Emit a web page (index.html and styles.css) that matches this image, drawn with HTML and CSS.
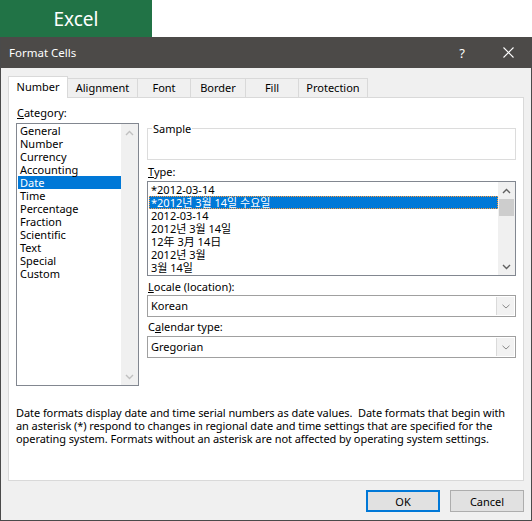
FILE: index.html
```html
<!DOCTYPE html>
<html lang="en">
<head>
<meta charset="utf-8">
<title>Format Cells</title>
<link rel="stylesheet" href="styles.css">
</head>
<body>
<div class="app-top"><div class="brand">Excel</div></div>
<div class="dialog">
  <div class="titlebar">
    <span class="title">Format Cells</span>
    <span class="tb-btn help">?</span>
    <span class="tb-btn close"><svg width="11" height="11" viewBox="0 0 11 11"><path d="M0.5 0.5 L10.5 10.5 M10.5 0.5 L0.5 10.5" stroke="#fff" stroke-width="1.1" fill="none"/></svg></span>
  </div>
  <div class="body">
    <div class="tabs">
      <div class="tab active t-number">Number</div>
      <div class="tab t-align">Alignment</div>
      <div class="tab t-font">Font</div>
      <div class="tab t-border">Border</div>
      <div class="tab t-fill">Fill</div>
      <div class="tab t-prot">Protection</div>
    </div>
    <div class="panel">
      <div class="cols">
        <div class="left">
          <div class="label"><u>C</u>ategory:</div>
          <div class="listbox cat">
            <div class="items">
              <div class="row">General</div>
              <div class="row">Number</div>
              <div class="row">Currency</div>
              <div class="row">Accounting</div>
              <div class="row sel">Date</div>
              <div class="row">Time</div>
              <div class="row">Percentage</div>
              <div class="row">Fraction</div>
              <div class="row">Scientific</div>
              <div class="row">Text</div>
              <div class="row">Special</div>
              <div class="row">Custom</div>
            </div>
            <div class="vscroll disabled">
              <div class="arrow"><svg width="9" height="6" viewBox="0 0 9 6"><path d="M1 5 L4.5 1.5 L8 5" stroke="currentColor" stroke-width="1.4" fill="none"/></svg></div>
              <div class="track"></div>
              <div class="arrow"><svg width="9" height="6" viewBox="0 0 9 6"><path d="M1 1 L4.5 4.5 L8 1" stroke="currentColor" stroke-width="1.4" fill="none"/></svg></div>
            </div>
          </div>
        </div>
        <div class="right">
          <fieldset class="sample"><legend>Sample</legend><div class="sample-body"></div></fieldset>
          <div class="label type-label"><u>T</u>ype:</div>
          <div class="listbox type">
            <div class="items">
              <div class="row">*2012-03-14</div>
              <div class="row sel focus">*2012년 3월 14일 수요일</div>
              <div class="row">2012-03-14</div>
              <div class="row">2012년 3월 14일</div>
              <div class="row">12年 3月 14日</div>
              <div class="row">2012년 3월</div>
              <div class="row">3월 14일</div>
            </div>
            <div class="vscroll">
              <div class="arrow"><svg width="9" height="6" viewBox="0 0 9 6"><path d="M1 5 L4.5 1.5 L8 5" stroke="currentColor" stroke-width="1.4" fill="none"/></svg></div>
              <div class="track"><div class="thumb"></div></div>
              <div class="arrow"><svg width="9" height="6" viewBox="0 0 9 6"><path d="M1 1 L4.5 4.5 L8 1" stroke="currentColor" stroke-width="1.4" fill="none"/></svg></div>
            </div>
          </div>
          <div class="label locale-label"><u>L</u>ocale (location):</div>
          <div class="select">
            <span class="value">Korean</span>
            <span class="drop"><svg width="8" height="5" viewBox="0 0 8 5"><path d="M0.5 0.8 L4 4 L7.5 0.8" stroke="#8a8a8a" stroke-width="1" fill="none"/></svg></span>
          </div>
          <div class="label cal-label">C<u>a</u>lendar type:</div>
          <div class="select">
            <span class="value">Gregorian</span>
            <span class="drop"><svg width="8" height="5" viewBox="0 0 8 5"><path d="M0.5 0.8 L4 4 L7.5 0.8" stroke="#8a8a8a" stroke-width="1" fill="none"/></svg></span>
          </div>
        </div>
      </div>
      <p class="desc">Date formats display date and time serial numbers as date values.&nbsp; Date formats that begin with<br>an asterisk (*) respond to changes in regional date and time settings that are specified for the<br>operating system. Formats without an asterisk are not affected by operating system settings.</p>
    </div>
    <div class="buttons">
      <button class="btn ok">OK</button>
      <button class="btn">Cancel</button>
    </div>
  </div>
</div>
</body>
</html>
```
FILE: styles.css
```css
* { box-sizing: border-box; }
html, body { margin: 0; padding: 0; }
body {
  width: 532px;
  height: 521px;
  overflow: hidden;
  background: #fff;
  color: #000;
  font-family: "Noto Sans", "Noto Sans CJK KR", sans-serif;
  font-size: 11px;
}
.app-top { height: 37px; display: flex; }
.brand {
  width: 152px;
  background: #217346;
  color: #fff;
  font-size: 19px;
  display: flex;
  align-items: center;
  justify-content: center;
  padding-top: 1px;
}
.dialog {
  height: 484px;
  border: 1px solid #4a4a4a;
  border-top: 0;
  background: #f0f0f0;
  display: flex;
  flex-direction: column;
}
.titlebar {
  height: 31px;
  background: #4c4a48;
  color: #fff;
  display: flex;
  align-items: center;
  padding-left: 8px;
  font-size: 11.5px;
}
.title { flex: 1; }
.tb-btn {
  width: 46px;
  height: 31px;
  display: flex;
  align-items: center;
  justify-content: center;
}
.help { font-size: 13px; }
.body { flex: 1; display: flex; flex-direction: column; }
.tabs {
  margin-top: 8px;
  height: 21px;
  padding-left: 7px;
  display: flex;
  align-items: flex-end;
}
.tab {
  height: 19px;
  border: 1px solid #d9d9d9;
  border-bottom: 0;
  margin-left: -1px;
  background: #f0f0f0;
  text-align: center;
  line-height: 18px;
}
.tab:first-child { margin-left: 0; }
.tab.active {
  height: 22px;
  margin-bottom: -1px;
  background: #fff;
  line-height: 20px;
  position: relative;
  z-index: 1;
}
.t-number { width: 60px; }
.t-align { width: 71px; }
.t-font { width: 54px; }
.t-border { width: 56px; }
.t-fill { width: 54px; }
.t-prot { width: 70px; }
.panel {
  margin: 0 7px;
  height: 384px;
  background: #fff;
  border: 1px solid #d9d9d9;
  padding: 7px 6px 0 7px;
}
.cols {
  display: grid;
  grid-template-columns: 123px 369px;
  column-gap: 8px;
  align-items: start;
}
.label { line-height: 15px; height: 15px; padding-left: 1px; margin-bottom: 2px; }
.left .label { margin-bottom: 3px; }
.listbox {
  border: 1px solid #828790;
  background: #fff;
  display: flex;
}
.listbox.cat { height: 263px; }
.listbox.type { height: 95px; }
.items { flex: 1; padding-left: 1px; }
.type .items { padding-top: 1px; }
.row {
  height: 13px;
  line-height: 13px;
  padding-left: 2px;
  white-space: nowrap;
}
.row.sel { background: #0078d7; color: #fff; }
.row.focus { outline: 1px dotted #ff9a3a; outline-offset: -1px; }
.vscroll {
  width: 17px;
  background: #f0f0f0;
  display: flex;
  flex-direction: column;
  color: #606060;
}
.vscroll.disabled { color: #c0c0c0; }
.arrow {
  height: 17px;
  display: flex;
  align-items: center;
  justify-content: center;
}
.track { flex: 1; }
.thumb { height: 17px; margin: 0 1px; background: #cdcdcd; }
.right { padding-top: 16px; }
.sample {
  margin: 0;
  padding: 0;
  border: 1px solid #dcdcdc;
}
.sample legend {
  margin-left: 4px;
  padding: 0 1px;
  line-height: 15px;
}
.sample-body { height: 23px; }
.type-label { margin-top: 4px; }
.locale-label { margin-top: 3px; margin-bottom: 1px; }
.cal-label { margin-top: 2px; }
.select {
  height: 22px;
  border: 1px solid #a0a0a0;
  background: #fff;
  display: flex;
  align-items: stretch;
}
.select .value { flex: 1; padding-left: 3px; line-height: 20px; }
.drop {
  width: 18px;
  margin: 1px;
  border-left: 1px solid #dadada;
  background: #f2f2f2;
  display: flex;
  align-items: center;
  justify-content: center;
}
.desc {
  margin: 20px 0 0 0;
  line-height: 13px;
  white-space: nowrap;
  letter-spacing: -0.07px;
}
.buttons {
  margin-top: 9px;
  padding-right: 7px;
  display: flex;
  justify-content: flex-end;
  gap: 10px;
}
.btn {
  width: 74px;
  height: 22px;
  background: #e1e1e1;
  border: 1px solid #adadad;
  font-family: inherit;
  font-size: 11px;
  color: #000;
  padding: 0;
}
.btn.ok { border: 2px solid #0078d7; }
```
